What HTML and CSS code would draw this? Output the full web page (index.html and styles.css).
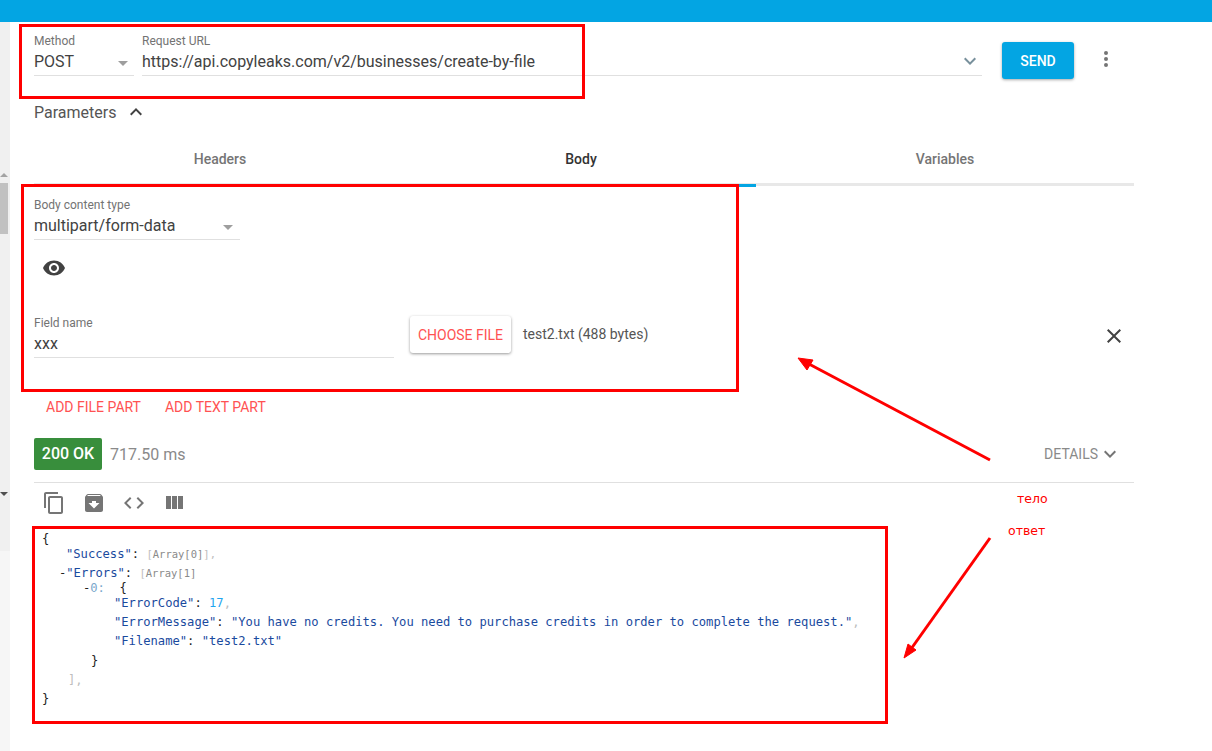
FILE: index.html
```html
<!DOCTYPE html>
<html lang="en">
<head>
    <meta charset="UTF-8">
    <title>Request</title>
    <link rel="stylesheet" href="styles.css">
</head>
<body>
    <div class="topbar"></div>
    <div class="page">
        <div class="side">
            <div class="side-track"></div>
            <div class="side-up"></div>
            <div class="side-thumb"></div>
            <div class="side-down"></div>
        </div>
        <div class="main">
            <div class="url-row">
                <div class="field method">
                    <label>Method</label>
                    <div class="value">POST<span class="caret"></span></div>
                </div>
                <div class="field url">
                    <label>Request URL</label>
                    <div class="value">https://api.copyleaks.com/v2/businesses/create-by-file
                        <svg class="url-arrow" width="24" height="24" viewBox="0 0 24 24"><path fill="#78909c" d="M7.41 8.59 12 13.17l4.59-4.58L18 10l-6 6-6-6z"/></svg>
                    </div>
                </div>
                <button class="send">SEND</button>
                <svg class="more" width="24" height="24" viewBox="0 0 24 24"><path fill="#757575" d="M12 8a2 2 0 1 0 0-4 2 2 0 0 0 0 4zm0 2a2 2 0 1 0 0 4 2 2 0 0 0 0-4zm0 6a2 2 0 1 0 0 4 2 2 0 0 0 0-4z"/></svg>
            </div>
            <div class="params">
                <span>Parameters</span>
                <svg width="24" height="24" viewBox="0 0 24 24"><path fill="#424242" d="M7.41 15.41 12 10.83l4.59 4.58L18 14l-6-6-6 6z"/></svg>
            </div>
            <div class="tabs">
                <div class="tab">Headers</div>
                <div class="tab active">Body</div>
                <div class="tab">Variables</div>
            </div>
            <div class="body-panel">
                <div class="field body-type">
                    <label>Body content type</label>
                    <div class="value">multipart/form-data<span class="caret"></span></div>
                </div>
                <svg class="eye" width="24" height="24" viewBox="0 0 24 24"><path fill="#424242" d="M12 4.500C7 4.500 2.730 7.610 1 12c1.730 4.390 6 7.500 11 7.500s9.270-3.110 11-7.500c-1.730-4.390-6-7.500-11-7.500zM12 17c-2.760 0-5-2.240-5-5s2.240-5 5-5 5 2.240 5 5-2.240 5-5 5zm0-8c-1.660 0-3 1.340-3 3s1.340 3 3 3 3-1.340 3-3-1.340-3-3-3z"/></svg>
                <div class="file-row">
                    <div class="field name">
                        <label>Field name</label>
                        <div class="value">xxx</div>
                    </div>
                    <button class="choose">CHOOSE FILE</button>
                    <span class="file-info">test2.txt (488 bytes)</span>
                    <svg class="close" width="24" height="24" viewBox="0 0 24 24"><path fill="#424242" d="M19 6.410 17.590 5 12 10.590 6.410 5 5 6.410 10.590 12 5 17.590 6.410 19 12 13.410 17.590 19 19 17.590 13.410 12z"/></svg>
                </div>
                <div class="part-links">
                    <span>ADD FILE PART</span>
                    <span>ADD TEXT PART</span>
                </div>
            </div>
            <div class="status-row">
                <span class="status">200 OK</span>
                <span class="time">717.50 ms</span>
                <span class="details">DETAILS
                    <svg width="24" height="24" viewBox="0 0 24 24"><path fill="#757575" d="M7.41 8.59 12 13.17l4.59-4.58L18 10l-6 6-6-6z"/></svg>
                </span>
            </div>
            <div class="tools">
                <svg width="24" height="24" viewBox="0 0 24 24"><path fill="#757575" d="M16 1H4c-1.100 0-2 .9-2 2v14h2V3h12V1zm3 4H8c-1.100 0-2 .9-2 2v14c0 1.100.9 2 2 2h11c1.100 0 2-.9 2-2V7c0-1.100-.9-2-2-2zm0 16H8V7h11v14z"/></svg>
                <svg width="24" height="24" viewBox="0 0 24 24"><path fill="#757575" d="M20.540 5.230 19.150 3.550C18.880 3.210 18.470 3 18 3H6c-.47 0-.88.21-1.160.55L3.460 5.230C3.170 5.570 3 6.020 3 6.500V19c0 1.100.9 2 2 2h14c1.100 0 2-.9 2-2V6.500c0-.48-.17-.93-.46-1.270zM12 17.500 6.500 12H10v-2h4v2h3.500L12 17.500zM5.120 5l.81-1h12l.94 1H5.120z"/></svg>
                <svg width="24" height="24" viewBox="0 0 24 24"><path fill="#757575" d="M9.400 16.600 4.800 12l4.600-4.600L8 6l-6 6 6 6 1.400-1.400zm5.200 0 4.600-4.600-4.600-4.600L16 6l6 6-6 6-1.400-1.400z"/></svg>
                <svg width="24" height="24" viewBox="0 0 24 24"><path fill="#757575" d="M10 18h5V5h-5v13zm-6 0h5V5H4v13zM16 5v13h5V5h-5z"/></svg>
            </div>
            <div class="json">
                <div class="ln">{</div>
                <div class="ln in1 tight"><span class="key">"Success"</span>: <span class="arr"><i>[</i>Array[0]<i>],</i></span></div>
                <div class="ln in1 wide"><b class="minus">-</b><span class="key">"Errors"</span>: <span class="arr"><i>[</i>Array[1]</span></div>
                <div class="ln in2 tight"><b class="minus">-</b><span class="idx">0:</span>  {</div>
                <div class="ln in3 tight"><span class="key">"ErrorCode"</span>: <span class="num">17</span><i class="dim">,</i></div>
                <div class="ln in3 wide"><span class="key">"ErrorMessage"</span>: <span class="key">"You have no credits. You need to purchase credits in order to complete the request."</span><i class="dim">,</i></div>
                <div class="ln in3 wide"><span class="key">"Filename"</span>: <span class="key">"test2.txt"</span></div>
                <div class="ln in4">}</div>
                <div class="ln in5 wide dim">],</div>
                <div class="ln wide">}</div>
            </div>
        </div>
    </div>

    <!-- red marks drawn over the screenshot -->
    <div class="mark mark-url"></div>
    <div class="mark mark-body"></div>
    <div class="mark mark-json"></div>
    <span class="note note-a">тело</span>
    <span class="note note-b">ответ</span>
    <svg class="arrows" width="1212" height="751" viewBox="0 0 1212 751">
        <path d="M990 460 809 364" stroke="#f00" stroke-width="3" fill="none"/>
        <path d="M798 358 813 360 807 370z" fill="#f00" stroke="#f00"/>
        <path d="M990 538 911 649" stroke="#f00" stroke-width="3" fill="none"/>
        <path d="M904 658 908 644 916 650z" fill="#f00" stroke="#f00"/>
    </svg>
</body>
</html>
```
FILE: styles.css
```css
* {
    box-sizing: border-box;
}
html, body {
    height: 100%;
    overflow: hidden;
}
body {
    margin: 0;
    background: white;
    font-family: Roboto, sans-serif;
    color: #424242;
    position: relative;
}
.topbar {
    height: 22px;
    background: #03A5E3;
}
.page {
    display: flex;
    height: 729px;
}
.side {
    width: 10px;
    background: #F0F0F0;
    position: relative;
}
.side-track {
    position: absolute;
    top: 529px;
    bottom: 0;
    left: 0;
    right: 0;
    background: #F6F6F6;
}
.side-thumb {
    position: absolute;
    top: 161px;
    left: 0;
    width: 8px;
    height: 51px;
    background: #C1C1C1;
}
.side-up, .side-down {
    position: absolute;
    left: 0;
    border-left: 4px solid transparent;
    border-right: 4px solid transparent;
}
.side-up {
    top: 151px;
    border-bottom: 4px solid #A3A3A3;
}
.side-down {
    top: 470px;
    border-top: 4px solid #505050;
}
.main {
    width: 1124px;
    padding-left: 24px;
}
.field label {
    display: block;
    font-size: 12px;
    line-height: 14px;
    color: #737373;
}
.field .value {
    position: relative;
    font-size: 16px;
    line-height: 24px;
    height: 26px;
    margin-top: 2px;
    border-bottom: 1px solid #E0E0E0;
    color: #424242;
}
.caret {
    position: absolute;
    right: 6px;
    top: 11px;
    border-left: 5px solid transparent;
    border-right: 5px solid transparent;
    border-top: 5px solid #9E9E9E;
}
.url-row {
    display: flex;
    align-items: flex-start;
    padding-top: 12px;
    height: 76px;
}
.method {
    width: 100px;
    margin-right: 8px;
}
.url {
    width: 840px;
    margin-right: 20px;
}
.url-arrow {
    position: absolute;
    right: 0;
    top: -1px;
}
.send {
    width: 72px;
    height: 37px;
    margin-top: 8px;
    border: 0;
    border-radius: 3px;
    background: #03A5E3;
    color: white;
    font: 500 14px Roboto, sans-serif;
    box-shadow: 0 1px 3px rgba(0, 0, 0, 0.35);
}
.more {
    margin: 13px 0 0 20px;
}
.params {
    display: flex;
    align-items: center;
    gap: 8px;
    height: 28px;
    font-size: 16px;
    color: #555;
}
.tabs {
    display: grid;
    grid-template-columns: 372px 350px 378px;
    height: 52px;
    margin-top: 8px;
    border-bottom: 3px solid #E8E8E8;
}
.tab {
    text-align: center;
    font-size: 14px;
    line-height: 50px;
    font-weight: 500;
    color: #757575;
}
.tab.active {
    color: #333;
    position: relative;
}
.tab.active::after {
    content: "";
    position: absolute;
    left: 0;
    right: 0;
    bottom: -3px;
    height: 3px;
    background: #03A5E3;
}
.body-panel {
    padding-top: 12px;
}
.body-type {
    width: 206px;
}
.body-type .caret {
    right: 7px;
}
.eye {
    display: block;
    margin: 16px 0 0 8px;
}
.file-row {
    display: flex;
    align-items: flex-start;
    margin-top: 36px;
    position: relative;
}
.name {
    width: 360px;
    margin-right: 16px;
}
.choose {
    width: 101px;
    height: 37px;
    border: 0;
    border-radius: 3px;
    background: white;
    color: #FF5252;
    font: 400 14px Roboto, sans-serif;
    box-shadow: 0 1px 3px rgba(0, 0, 0, 0.4);
}
.file-info {
    margin-left: 12px;
    font-size: 14px;
    line-height: 37px;
    color: #555;
}
.close {
    position: absolute;
    right: 8px;
    top: 8px;
}
.part-links {
    display: flex;
    gap: 24px;
    padding-left: 12px;
    margin-top: 39px;
    font-size: 14px;
    line-height: 20px;
    color: #FF5252;
}
.status-row {
    display: flex;
    align-items: center;
    height: 32px;
    margin-top: 21px;
}
.status {
    background: #388E3C;
    color: white;
    font-size: 16px;
    font-weight: 500;
    line-height: 32px;
    width: 68px;
    text-align: center;
    border-radius: 2px;
}
.time {
    margin-left: 8px;
    font-size: 16px;
    color: #8a8a8a;
}
.details {
    display: flex;
    align-items: center;
    margin-left: auto;
    margin-right: 12px;
    font-size: 14px;
    color: #8a8a8a;
}
.tools {
    display: flex;
    gap: 16px;
    padding: 8px 0 0 8px;
    margin-top: 12px;
    height: 45px;
    border-top: 1px solid #E0E0E0;
}
.json {
    padding: 4px 0 0 8px;
    font-family: "DejaVu Sans Mono", monospace;
    font-size: 12.15px;
    color: #222;
}
.ln {
    height: 16px;
    line-height: 16px;
    white-space: pre;
}
.tight { margin-top: -1px; }
.wide { margin-top: 3px; }
.in1 { padding-left: 24px; }
.in2 { padding-left: 48px; }
.in3 { padding-left: 72px; }
.in4 { padding-left: 49px; margin-top: 4px; }
.in5 { padding-left: 26px; }
.key { color: #1A4A9E; }
.num { color: #1FA5F0; }
.idx { color: #7AA7CC; }
.arr { color: #8a8a8a; font-size: 10.5px; }
.arr i, .dim { color: #bdbdbd; font-style: normal; }
.minus {
    font-weight: 400;
    margin-left: -7px;
}
.mark {
    position: absolute;
    border: 3px solid #f00;
}
.mark-url {
    left: 19px;
    top: 24px;
    width: 566px;
    height: 75px;
}
.mark-body {
    left: 21px;
    top: 184px;
    width: 718px;
    height: 208px;
}
.mark-json {
    left: 32px;
    top: 526px;
    width: 856px;
    height: 198px;
}
.note {
    position: absolute;
    font-family: "DejaVu Sans", sans-serif;
    font-size: 12.5px;
    color: #f00;
}
.note-a {
    left: 1017px;
    top: 491px;
}
.note-b {
    left: 1008px;
    top: 523px;
}
.arrows {
    position: absolute;
    left: 0;
    top: 0;
    pointer-events: none;
}
```
